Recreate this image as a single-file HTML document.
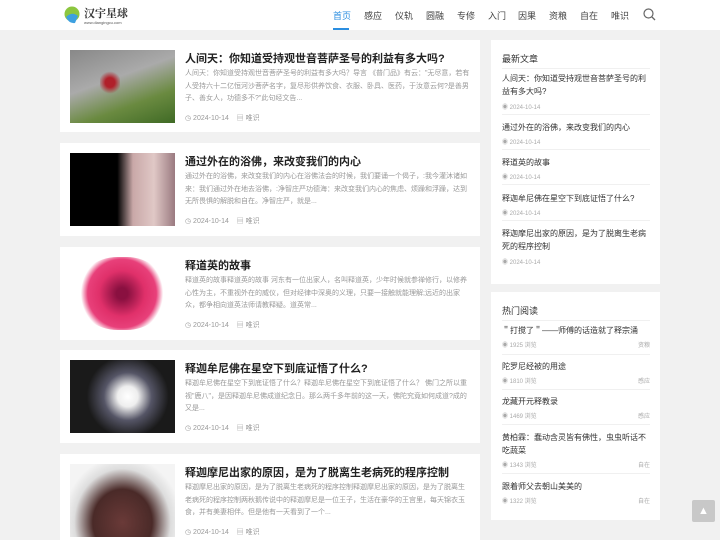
<!DOCTYPE html><html><head><meta charset="utf-8"><style>
*{margin:0;padding:0;box-sizing:border-box}
body{width:720px;height:540px;overflow:hidden;background:#f1f1f1;font-family:"Liberation Sans","Noto Sans CJK SC",sans-serif;position:relative}
.hd{position:absolute;left:0;top:0;width:720px;height:30px;background:#fff}
.nav{position:absolute;top:9px;font-size:9px;color:#444}
.nav span{position:absolute;white-space:nowrap}
.card{position:absolute;left:60px;width:420px;background:#fff}
.img{position:absolute;left:10px;top:10px;width:105px;height:73px}
.t{position:absolute;left:125px;top:10px;font-size:11px;font-weight:bold;color:#222;white-space:nowrap}
.d{position:absolute;left:125px;top:28px;width:286px;font-size:7px;line-height:12.5px;color:#999;height:38px;overflow:hidden}
.m{position:absolute;left:125px;top:73px;font-size:7px;color:#999}
.side{position:absolute;left:491px;width:169px;background:#fff}
.h{position:absolute;left:11px;top:12px;font-size:9px;color:#333}
.it{position:absolute;left:11px;width:148px;font-size:8px;line-height:13px;color:#333}
.dt{position:absolute;left:11px;font-size:6px;color:#aaa}
.ln{position:absolute;left:11px;width:148px;height:1px;background:#f0f0f0}
.cat{position:absolute;right:10px;font-size:6px;color:#aaa}
</style></head><body>
<div class="hd">
<svg style="position:absolute;left:63px;top:6px" width="20" height="18"><circle cx="9" cy="8" r="7.5" fill="#8cc63f"/><path d="M3 11 Q9 5 15 10 L12 17 Q6 18 3 11Z" fill="#3da0e0"/></svg>
<div style="position:absolute;left:84px;top:5px;font-size:11px;font-weight:bold;color:#333;font-family:'Noto Serif CJK SC',serif">汉宇星球</div>
<div style="position:absolute;left:84px;top:20px;font-size:4px;color:#555">www.diangingcu.com</div>
<div class="nav"><span style="left:333px;color:#2b8ee0">首页</span><span style="left:364px">感应</span><span style="left:395px">仪轨</span><span style="left:426px">圆融</span><span style="left:457px">专修</span><span style="left:488px">入门</span><span style="left:518px">因果</span><span style="left:549px">资粮</span><span style="left:580px">自在</span><span style="left:611px">唯识</span></div>
<div style="position:absolute;left:333px;top:28px;width:16px;height:2px;background:#2b8ee0"></div>
<svg style="position:absolute;left:643px;top:8px" width="13" height="13"><circle cx="5.5" cy="5.5" r="4.5" fill="none" stroke="#666" stroke-width="1.2"/><path d="M9 9 L12 12" stroke="#666" stroke-width="1.3"/></svg>
</div>

<div class="card" style="top:40px;height:92px"><div class="img" style="background:linear-gradient(160deg,#888 0%,#aaa 40%,#6a8a40 70%,#3f6a25 100%)"><div style="position:absolute;left:30px;top:20px;width:20px;height:25px;background:radial-gradient(circle,#b0202a 30%,transparent 70%)"></div></div>
<div class="t">人间天：你知道受持观世音菩萨圣号的利益有多大吗?</div>
<div class="d">人间天：你知道受持观世音菩萨圣号的利益有多大吗？导言 《普门品》有云："无尽意，若有人受持六十二亿恒河沙菩萨名字，复尽形供养饮食、衣服、卧具、医药，于汝意云何?是善男子、善女人，功德多不?"此句经文告...</div>
<div class="m">◷ 2024-10-14 &nbsp;&nbsp; ▤ 唯识</div></div>

<div class="card" style="top:143px;height:93px"><div class="img" style="background:linear-gradient(90deg,#000 0%,#000 45%,#c9a8a8 60%,#e0c8c6 80%,#9a7a80 100%)"></div>
<div class="t">通过外在的浴佛，来改变我们的内心</div>
<div class="d">通过外在的浴佛，来改变我们的内心在浴佛法会的时候，我们要诵一个偈子，:我今灌沐诸如来：我们通过外在地去浴佛，:净智庄严功德海：来改变我们内心的焦虑、烦躁和浮躁，达到无所畏惧的解脱和自在。净智庄严，就是...</div>
<div class="m">◷ 2024-10-14 &nbsp;&nbsp; ▤ 唯识</div></div>

<div class="card" style="top:247px;height:93px"><div class="img" style="background:#fff"><div style="position:absolute;left:8px;top:0;width:88px;height:73px;border-radius:45%;background:radial-gradient(circle,#8a1040 10%,#e0306a 40%,#e8407a 60%,transparent 72%)"></div></div>
<div class="t">释道英的故事</div>
<div class="d">释道英的故事释道英的故事 河东有一位出家人，名叫释道英，少年时候就参禅修行，以修养心性为主，不重视外在的威仪，但对经律中深奥的义理，只要一接触就能理解;远近的出家众，都争相向道英法师请教释疑。道英常...</div>
<div class="m">◷ 2024-10-14 &nbsp;&nbsp; ▤ 唯识</div></div>

<div class="card" style="top:350px;height:93px"><div class="img" style="background:radial-gradient(circle at 55% 50%,#fff 0%,#eee 15%,#556 35%,#1a1a1a 60%)"></div>
<div class="t">释迦牟尼佛在星空下到底证悟了什么?</div>
<div class="d">释迦牟尼佛在星空下到底证悟了什么？释迦牟尼佛在星空下到底证悟了什么？ 佛门之所以重视"鹿八"，是因释迦牟尼佛成道纪念日。那么两千多年前的这一天，佛陀究竟如何成道?成的又是...</div>
<div class="m">◷ 2024-10-14 &nbsp;&nbsp; ▤ 唯识</div></div>

<div class="card" style="top:454px;height:86px"><div class="img" style="background:radial-gradient(ellipse at 50% 80%,#6a3a38 0%,#4a2a28 40%,#ddd 65%,#f4f4f4 80%)"></div>
<div class="t">释迦摩尼出家的原因，是为了脱离生老病死的程序控制</div>
<div class="d">释迦摩尼出家的原因，是为了脱离生老病死的程序控制释迦摩尼出家的原因，是为了脱离生老病死的程序控制两秋鹅传说中的释迦摩尼是一位王子，生活在豪华的王宫里，每天锦衣玉食，并有美妻相伴。但是他有一天看到了一个...</div>
<div class="m">◷ 2024-10-14 &nbsp;&nbsp; ▤ 唯识</div></div>

<div class="side" style="top:40px;height:244px">
<div class="h">最新文章</div><div class="ln" style="top:28px"></div>
<div class="it" style="top:32px">人间天：你知道受持观世音菩萨圣号的利益有多大吗?</div><div class="dt" style="top:62px">◉ 2024-10-14</div><div class="ln" style="top:74px"></div>
<div class="it" style="top:81px">通过外在的浴佛，来改变我们的内心</div><div class="dt" style="top:97px">◉ 2024-10-14</div><div class="ln" style="top:109px"></div>
<div class="it" style="top:116px">释道英的故事</div><div class="dt" style="top:132px">◉ 2024-10-14</div><div class="ln" style="top:144px"></div>
<div class="it" style="top:152px">释迦牟尼佛在星空下到底证悟了什么?</div><div class="dt" style="top:168px">◉ 2024-10-14</div><div class="ln" style="top:180px"></div>
<div class="it" style="top:187px">释迦摩尼出家的原因，是为了脱离生老病死的程序控制</div><div class="dt" style="top:217px">◉ 2024-10-14</div>
</div>

<div class="side" style="top:292px;height:228px">
<div class="h">热门阅读</div><div class="ln" style="top:28px"></div>
<div class="it" style="top:32px">＂打搅了＂——师傅的话造就了释宗涌</div><div class="dt" style="top:48px">◉ 1925 浏览</div><div class="cat" style="top:48px">资粮</div><div class="ln" style="top:62px"></div>
<div class="it" style="top:68px">陀罗尼经被的用途</div><div class="dt" style="top:84px">◉ 1810 浏览</div><div class="cat" style="top:84px">感应</div><div class="ln" style="top:97px"></div>
<div class="it" style="top:103px">龙藏开元释教录</div><div class="dt" style="top:119px">◉ 1469 浏览</div><div class="cat" style="top:119px">感应</div><div class="ln" style="top:132px"></div>
<div class="it" style="top:139px">黄柏霖：蠢动含灵皆有佛性，虫虫听话不吃蔬菜</div><div class="dt" style="top:168px">◉ 1343 浏览</div><div class="cat" style="top:168px">自在</div><div class="ln" style="top:181px"></div>
<div class="it" style="top:188px">跟着师父去朝山美美的</div><div class="dt" style="top:204px">◉ 1322 浏览</div><div class="cat" style="top:204px">自在</div>
</div>

<div style="position:absolute;left:692px;top:500px;width:23px;height:22px;background:#c8c8c8;border-radius:2px;color:#fff;font-size:11px;text-align:center;line-height:22px">▲</div>
</body></html>
